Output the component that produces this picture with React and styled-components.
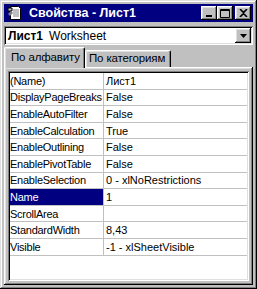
import React from 'react';
import styled, { createGlobalStyle } from 'styled-components';

const GlobalStyle = createGlobalStyle`
  html, body {
    margin: 0;
    padding: 0;
    background: #c0c0c0;
  }
  body {
    font-family: "Liberation Sans", Arial, sans-serif;
    font-size: 11px;
  }
`;

const raised = `
  box-shadow: inset -1px -1px #000, inset 1px 1px #fff, inset -2px -2px #808080, inset 2px 2px #dfdfdf;
`;

const Window = styled.div`
  width: 257px;
  height: 289px;
  box-sizing: border-box;
  padding: 4px;
  background: #c0c0c0;
  box-shadow: inset -1px -1px #000, inset 1px 1px #dfdfdf, inset -2px -2px #808080, inset 2px 2px #fff;
  display: flex;
  flex-direction: column;
`;

const TitleBar = styled.div`
  height: 18px;
  background: #000080;
  display: flex;
  align-items: center;
  padding: 0 2px 0 3px;
  color: #fff;
`;

const Title = styled.div`
  flex: 1;
  margin-left: 6px;
  font-weight: bold;
  font-size: 12.5px;
  white-space: nowrap;
`;

const CapButton = styled.button`
  width: 16px;
  height: 14px;
  padding: 0;
  border: 0;
  background: #c0c0c0;
  display: flex;
  align-items: center;
  justify-content: center;
  margin-left: ${(p) => p.$gap || 0}px;
  ${raised}
`;

const Combo = styled.div`
  margin-top: 4px;
  height: 19px;
  background: #fff;
  box-sizing: border-box;
  padding: 2px;
  display: flex;
  align-items: center;
  box-shadow: inset 1px 1px #808080, inset -1px -1px #fff, inset 2px 2px #000, inset -2px -2px #dfdfdf;
`;

const ComboText = styled.div`
  flex: 1;
  padding-left: 2px;
  font-size: 12px;
  white-space: nowrap;
  b {
    font-weight: bold;
    margin-right: 6px;
  }
`;

const DropButton = styled.div`
  width: 16px;
  height: 15px;
  background: #c0c0c0;
  display: flex;
  align-items: center;
  justify-content: center;
  ${raised}
`;

const TabRow = styled.div`
  margin-top: 2px;
  display: flex;
  align-items: flex-end;
  position: relative;
  z-index: 1;
`;

const Tab = styled.div`
  flex: none;
  box-sizing: border-box;
  height: ${(p) => (p.$active ? 21 : 17)}px;
  width: ${(p) => p.$w}px;
  margin-bottom: ${(p) => (p.$active ? -1 : 0)}px;
  padding: ${(p) => (p.$active ? '3px 0 0 6px' : '1px 0 0 3px')};
  background: #c0c0c0;
  border-top: 1px solid #fff;
  border-left: 1px solid #fff;
  border-right: 1px solid #000;
  border-radius: 2px 2px 0 0;
  box-shadow: inset -1px 0 #808080, inset 1px 1px #dfdfdf;
  font-size: 11.5px;
  letter-spacing: -0.15px;
  white-space: nowrap;
  overflow: hidden;
`;

const Panel = styled.div`
  flex: 1;
  padding: 4px;
  display: flex;
  box-shadow: inset -1px -1px #000, inset 1px 1px #fff, inset -2px -2px #808080, inset 2px 2px #dfdfdf;
`;

const Grid = styled.div`
  flex: 1;
  background: #fff;
  padding: 2px;
  box-shadow: inset 1px 1px #808080, inset -1px -1px #fff, inset 2px 2px #000, inset -2px -2px #dfdfdf;
`;

const Rows = styled.div`
  display: grid;
  grid-template-columns: 94px 1fr;
  grid-auto-rows: 16.6px;
`;

const Cell = styled.div`
  box-sizing: border-box;
  border-bottom: 1px solid #c0c0c0;
  border-right: ${(p) => (p.$name ? '1px solid #c0c0c0' : '0')};
  padding-left: ${(p) => (p.$name ? 0 : 2)}px;
  display: flex;
  align-items: center;
  font-size: 11px;
  letter-spacing: ${(p) => (p.$name ? '-0.25px' : '0')};
  white-space: nowrap;
  overflow: hidden;
  color: ${(p) => (p.$sel ? '#fff' : '#000')};
  background: ${(p) => (p.$sel ? '#000080' : '#fff')};
`;

const props = [
  ['(Name)', 'Лист1'],
  ['DisplayPageBreaks', 'False'],
  ['EnableAutoFilter', 'False'],
  ['EnableCalculation', 'True'],
  ['EnableOutlining', 'False'],
  ['EnablePivotTable', 'False'],
  ['EnableSelection', '0 - xlNoRestrictions'],
  ['Name', '1', true],
  ['ScrollArea', ''],
  ['StandardWidth', '8,43'],
  ['Visible', '-1 - xlSheetVisible'],
];

const PropsIcon = () => (
  <svg width="16" height="16" viewBox="0 0 16 16">
    <path d="M3.5 1.5h8l2 2v11h-10z" fill="#fff" stroke="#000" strokeWidth="1" />
    <path d="M6 5h6M6 7h6M6 9h6M6 11h6" stroke="#808080" strokeWidth="1" />
    <path d="M1 3l4 0 0 3-4 0z" fill="#c0c0c0" stroke="#000" strokeWidth="1" />
    <path d="M1 9l3-3 2 2-3 3z" fill="#808080" />
  </svg>
);

const App = () => (
  <>
    <GlobalStyle />
    <Window>
      <TitleBar>
        <PropsIcon />
        <Title>Свойства - Лист1</Title>
        <CapButton aria-label="min">
          <svg width="8" height="8" viewBox="0 0 8 8">
            <path d="M1 6h6v2H1z" fill="#000" />
          </svg>
        </CapButton>
        <CapButton aria-label="max">
          <svg width="10" height="9" viewBox="0 0 10 9">
            <path d="M0.5 0.5h9v8h-9z" fill="none" stroke="#000" strokeWidth="1" />
            <path d="M0 1.5h10" stroke="#000" strokeWidth="1" />
          </svg>
        </CapButton>
        <CapButton aria-label="close" $gap={2}>
          <svg width="9" height="8" viewBox="0 0 9 8">
            <path d="M1 0l3.5 3.5L8 0M1 8l3.5-3.5L8 8" fill="none" stroke="#000" strokeWidth="1.6" />
          </svg>
        </CapButton>
      </TitleBar>
      <Combo>
        <ComboText>
          <b>Лист1</b>Worksheet
        </ComboText>
        <DropButton>
          <svg width="7" height="4" viewBox="0 0 7 4">
            <path d="M0 0h7L3.5 4z" fill="#000" />
          </svg>
        </DropButton>
      </Combo>
      <TabRow>
        <Tab $active $w={81}>По алфавиту</Tab>
        <Tab $w={86}>По категориям</Tab>
      </TabRow>
      <Panel>
        <Grid>
          <Rows>
            {props.map(([n, v, sel]) => (
              <React.Fragment key={n}>
                <Cell $name $sel={sel}>{n}</Cell>
                <Cell>{v}</Cell>
              </React.Fragment>
            ))}
          </Rows>
        </Grid>
      </Panel>
    </Window>
  </>
);

export default App;
